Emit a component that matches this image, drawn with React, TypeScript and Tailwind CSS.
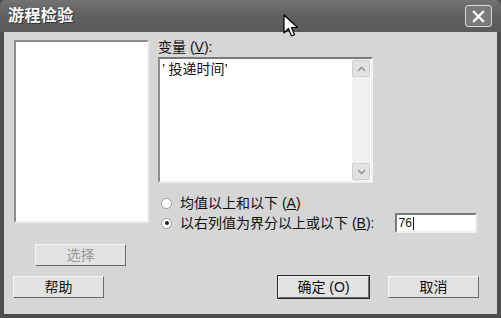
const font = { fontFamily: '"Liberation Sans", "Noto Sans CJK SC", sans-serif' };

function Btn({ label, disabled, primary, className }: { label: string; disabled?: boolean; primary?: boolean; className?: string }) {
  return (
    <div
      className={`h-[22px] w-[91px] flex items-center justify-center text-[14px] bg-[#e2e2e2] border border-t-[#f4f4f4] border-l-[#f4f4f4] border-r-[#6a6a6a] border-b-[#6a6a6a] ${
        primary ? 'outline outline-1 outline-[#2a2a2a]' : ''
      } ${disabled ? 'text-[#9a9a9a]' : 'text-[#111]'} ${className ?? ''}`}
    >
      {label}
    </div>
  );
}

function Radio({ checked }: { checked?: boolean }) {
  return (
    <div className="w-[11px] h-[11px] rounded-full bg-white border border-[#9a9a9a] flex items-center justify-center shrink-0">
      {checked && <div className="w-[4px] h-[4px] rounded-full bg-[#222]" />}
    </div>
  );
}

export default function App() {
  return (
    <div className="relative w-[501px] h-[318px] bg-[#4e4e4e] overflow-hidden select-none" style={font}>
      <div className="h-[32px] flex items-center justify-between px-2 bg-gradient-to-b from-[#727272] via-[#606060] to-[#5a5a5a] rounded-t-md">
        <span className="text-white font-bold text-[16px] tracking-wide [text-shadow:1px_1px_0_#333]">游程检验</span>
        <div className="w-[27px] h-[22px] mr-[1px] rounded-[3px] border border-[#d8d8d8] bg-[#7a7a7a] flex items-center justify-center">
          <svg width="13" height="13" viewBox="0 0 13 13">
            <path d="M2 2 L11 11 M11 2 L2 11" stroke="#fff" strokeWidth="2.4" strokeLinecap="square" />
          </svg>
        </div>
      </div>
      <div className="mx-[4px] h-[282px] bg-[#d6d6d6] relative">
        <div className="flex items-start pt-[8px]">
          <div className="ml-[10px] w-[135px] h-[183px] bg-white border-2 border-t-[#8e8e8e] border-l-[#8e8e8e] border-r-[#efefef] border-b-[#efefef]" />
          <div className="ml-[9px] flex flex-col text-[14px] text-[#111]">
            <div className="leading-none">
              变量 (<span className="underline">V</span>):
            </div>
            <div className="mt-[3px] w-[215px] h-[126px] bg-white border-2 border-t-[#7a7a7a] border-l-[#8e8e8e] border-r-[#efefef] border-b-[#efefef] flex">
              <div className="flex-1 leading-none pt-[3px] pl-[2px]">’ 投递时间’</div>
              <div className="w-[18px] flex flex-col bg-[#f0f0f0] mr-[1px]">
                <div className="h-[17px] bg-[#e2e2e2] border border-[#cfcfcf] rounded-[2px] flex items-center justify-center mt-[1px]">
                  <svg width="9" height="6" viewBox="0 0 9 6"><path d="M1 5 L4.5 1.5 L8 5" stroke="#9a9a9a" strokeWidth="1.6" fill="none" /></svg>
                </div>
                <div className="flex-1" />
                <div className="h-[17px] bg-[#e2e2e2] border border-[#cfcfcf] rounded-[2px] flex items-center justify-center mb-[1px]">
                  <svg width="9" height="6" viewBox="0 0 9 6"><path d="M1 1 L4.5 4.5 L8 1" stroke="#9a9a9a" strokeWidth="1.6" fill="none" /></svg>
                </div>
              </div>
            </div>
            <div className="mt-[13px] flex items-center gap-[8px] ml-[3px] leading-none">
              <Radio />
              <span>均值以上和以下 (<span className="underline">A</span>)</span>
            </div>
            <div className="mt-[3px] flex items-center ml-[3px] leading-none whitespace-nowrap">
              <Radio checked />
              <span className="ml-[8px]">以右列值为界分以上或以下 (<span className="underline">B</span>):</span>
              <div className="ml-[21px] w-[82px] h-[20px] shrink-0 bg-white border-2 border-t-[#7a7a7a] border-l-[#7a7a7a] border-r-[#efefef] border-b-[#efefef] flex items-center pl-[1px] text-[12px]">
                76<span className="w-px h-[13px] bg-[#111] ml-px" />
              </div>
            </div>
          </div>
        </div>
        <Btn label="选择" disabled className="ml-[31px] mt-[11px]" />
        <div className="flex mt-[10px]">
          <Btn label="帮助" className="ml-[9px]" />
          <Btn label="确定 (O)" primary className="ml-[174px]" />
          <Btn label="取消" className="ml-[19px]" />
        </div>
      </div>
      <svg className="absolute left-[283px] top-[14px]" width="18" height="25" viewBox="0 0 18 25">
        <path d="M1 1 L1 19 L5.5 14.5 L8.5 22 L11.5 20.8 L8.5 13.5 L14.5 13.5 Z" fill="#fff" stroke="#000" strokeWidth="1.2" strokeLinejoin="round" />
      </svg>
    </div>
  );
}
